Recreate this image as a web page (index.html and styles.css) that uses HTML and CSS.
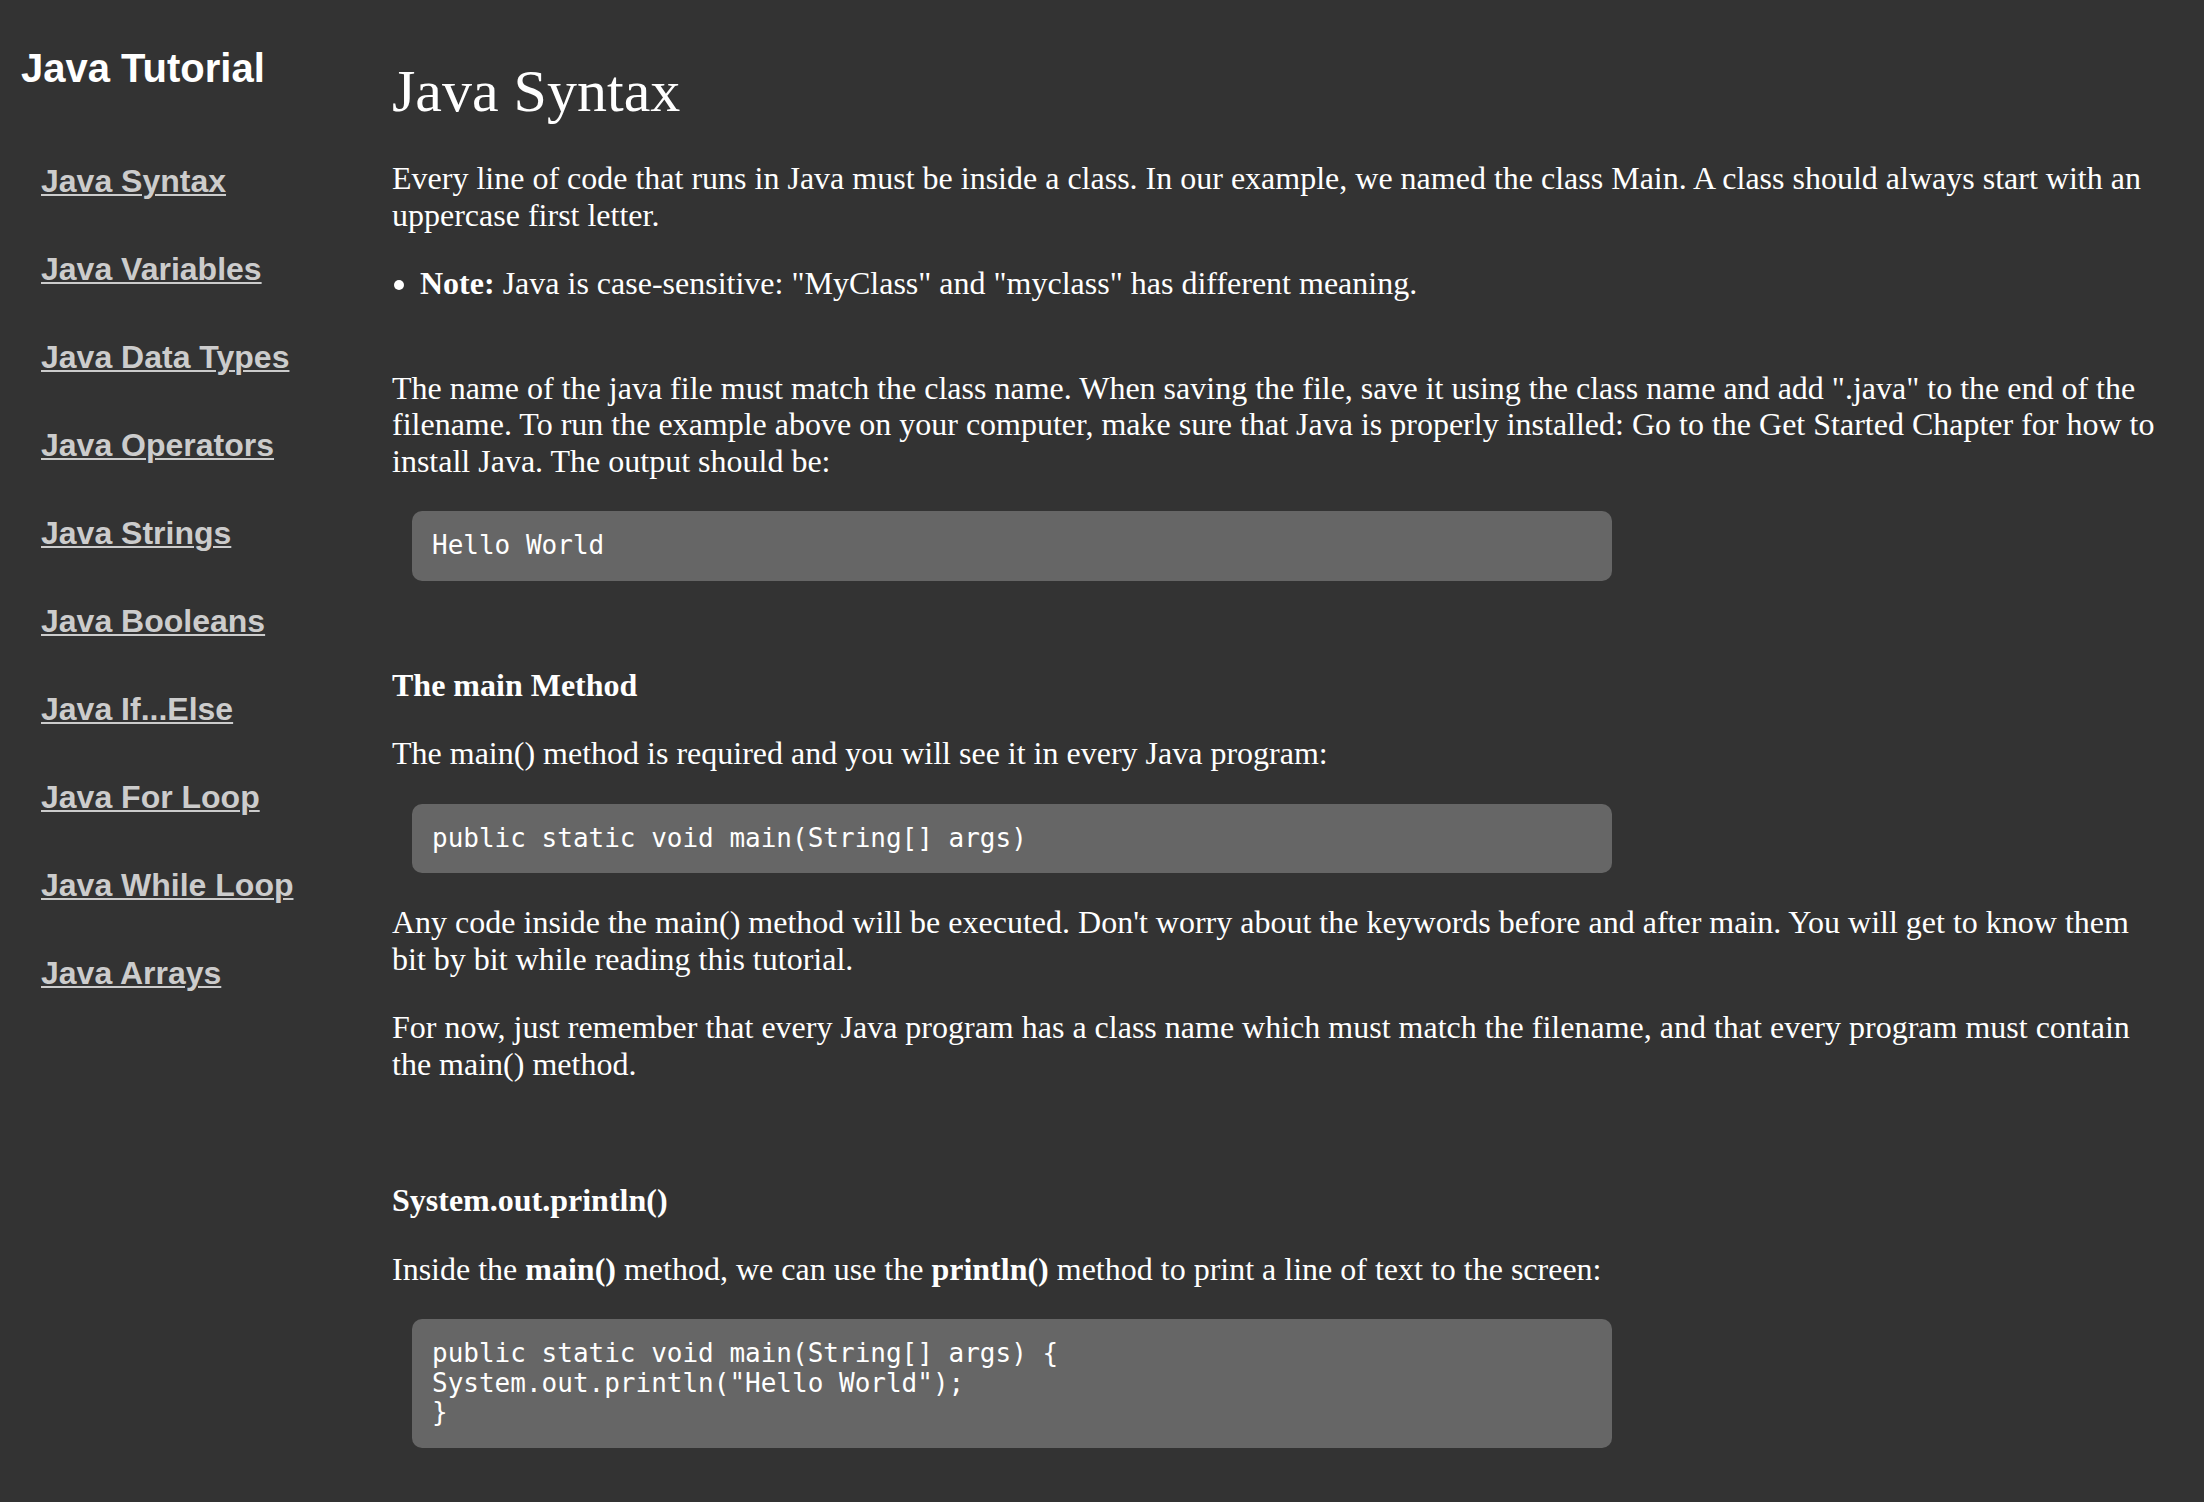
FILE: index.html
```html
<!DOCTYPE html>
<html lang="en">
<head>
<meta charset="utf-8">
<title>Java Syntax</title>
<link rel="stylesheet" href="styles.css">
</head>
<body>
<div class="page">
  <nav class="sidebar">
    <h2 class="sidebar-title">Java Tutorial</h2>
    <ul class="nav-list">
      <li class="nav-item"><a class="nav-link" href="#">Java Syntax</a></li>
      <li class="nav-item"><a class="nav-link" href="#">Java Variables</a></li>
      <li class="nav-item"><a class="nav-link" href="#">Java Data Types</a></li>
      <li class="nav-item"><a class="nav-link" href="#">Java Operators</a></li>
      <li class="nav-item"><a class="nav-link" href="#">Java Strings</a></li>
      <li class="nav-item"><a class="nav-link" href="#">Java Booleans</a></li>
      <li class="nav-item"><a class="nav-link" href="#">Java If...Else</a></li>
      <li class="nav-item"><a class="nav-link" href="#">Java For Loop</a></li>
      <li class="nav-item"><a class="nav-link" href="#">Java While Loop</a></li>
      <li class="nav-item"><a class="nav-link" href="#">Java Arrays</a></li>
    </ul>
  </nav>
  <main class="content">
    <h1 class="page-title">Java Syntax</h1>
    <p class="text text-first">Every line of code that runs in Java must be inside a class. In our example, we named the class Main. A class should always start with an uppercase first letter.</p>
    <ul class="notes">
      <li><strong>Note:</strong> Java is case-sensitive: "MyClass" and "myclass" has different meaning.</li>
    </ul>
    <p class="text text-after-list">The name of the java file must match the class name. When saving the file, save it using the class name and add ".java" to the end of the filename. To run the example above on your computer, make sure that Java is properly installed: Go to the Get Started Chapter for how to install Java. The output should be:</p>
    <pre class="code">Hello World</pre>
    <h4 class="subhead subhead-after-code">The main Method</h4>
    <p class="text">The main() method is required and you will see it in every Java program:</p>
    <pre class="code">public static void main(String[] args)</pre>
    <p class="text">Any code inside the main() method will be executed. Don't worry about the keywords before and after main. You will get to know them bit by bit while reading this tutorial.</p>
    <p class="text">For now, just remember that every Java program has a class name which must match the filename, and that every program must contain the main() method.</p>
    <h4 class="subhead subhead-after-text">System.out.println()</h4>
    <p class="text">Inside the <strong>main()</strong> method, we can use the <strong>println()</strong> method to print a line of text to the screen:</p>
    <pre class="code">public static void main(String[] args) {
System.out.println("Hello World");
}</pre>
  </main>
</div>
</body>
</html>
```
FILE: styles.css
```css
html, body {
  margin: 0;
  padding: 0;
  background: #333333;
}

body {
  color: #ffffff;
  font-family: "Liberation Serif", "Times New Roman", serif;
  font-size: 32px;
  line-height: 36.5px;
}

.page {
  display: flex;
  align-items: flex-start;
  min-height: 1502px;
}

.sidebar {
  flex: none;
  width: 352px;
  box-sizing: border-box;
  padding: 45px 0 0 21px;
  font-family: "Liberation Sans", Arial, sans-serif;
}

.sidebar-title {
  margin: 0;
  font-size: 40px;
  line-height: 46px;
  font-weight: bold;
  color: #ffffff;
}

.nav-list {
  list-style: none;
  margin: 70px 0 0;
  padding: 0 0 0 20px;
}

.nav-item {
  margin: 0 0 48px;
  line-height: 40px;
}

.nav-link {
  font-size: 32px;
  font-weight: bold;
  color: #cccccc;
  text-decoration: underline;
  text-decoration-thickness: 2px;
  text-underline-offset: 1.5px;
}

.content {
  flex: 1;
  min-width: 0;
  padding: 0 40px;
}

.page-title {
  margin: 57px 0 0;
  font-size: 60px;
  line-height: 69px;
  font-weight: normal;
}

.text {
  margin: 32px 0 0;
}

.text-first {
  margin-top: 34px;
}

.text-after-list {
  margin-top: 68px;
}

.notes {
  margin: 32px 0 0;
  padding: 0 0 0 28px;
  list-style: disc;
}

.subhead {
  margin: 32px 0 0;
  font-size: 32px;
  font-weight: bold;
}

.subhead-after-code {
  margin-top: 86px;
}

.subhead-after-text {
  margin-top: 100px;
}

.code {
  box-sizing: border-box;
  width: 1200px;
  margin: 32px 0 0 20px;
  padding: 20px;
  background: #666666;
  border-radius: 10px;
  color: #ffffff;
  font-family: "DejaVu Sans Mono", "Liberation Mono", monospace;
  font-size: 26px;
  line-height: 29.5px;
  white-space: pre;
}

.code + .text {
  margin-top: 31px;
}
```
